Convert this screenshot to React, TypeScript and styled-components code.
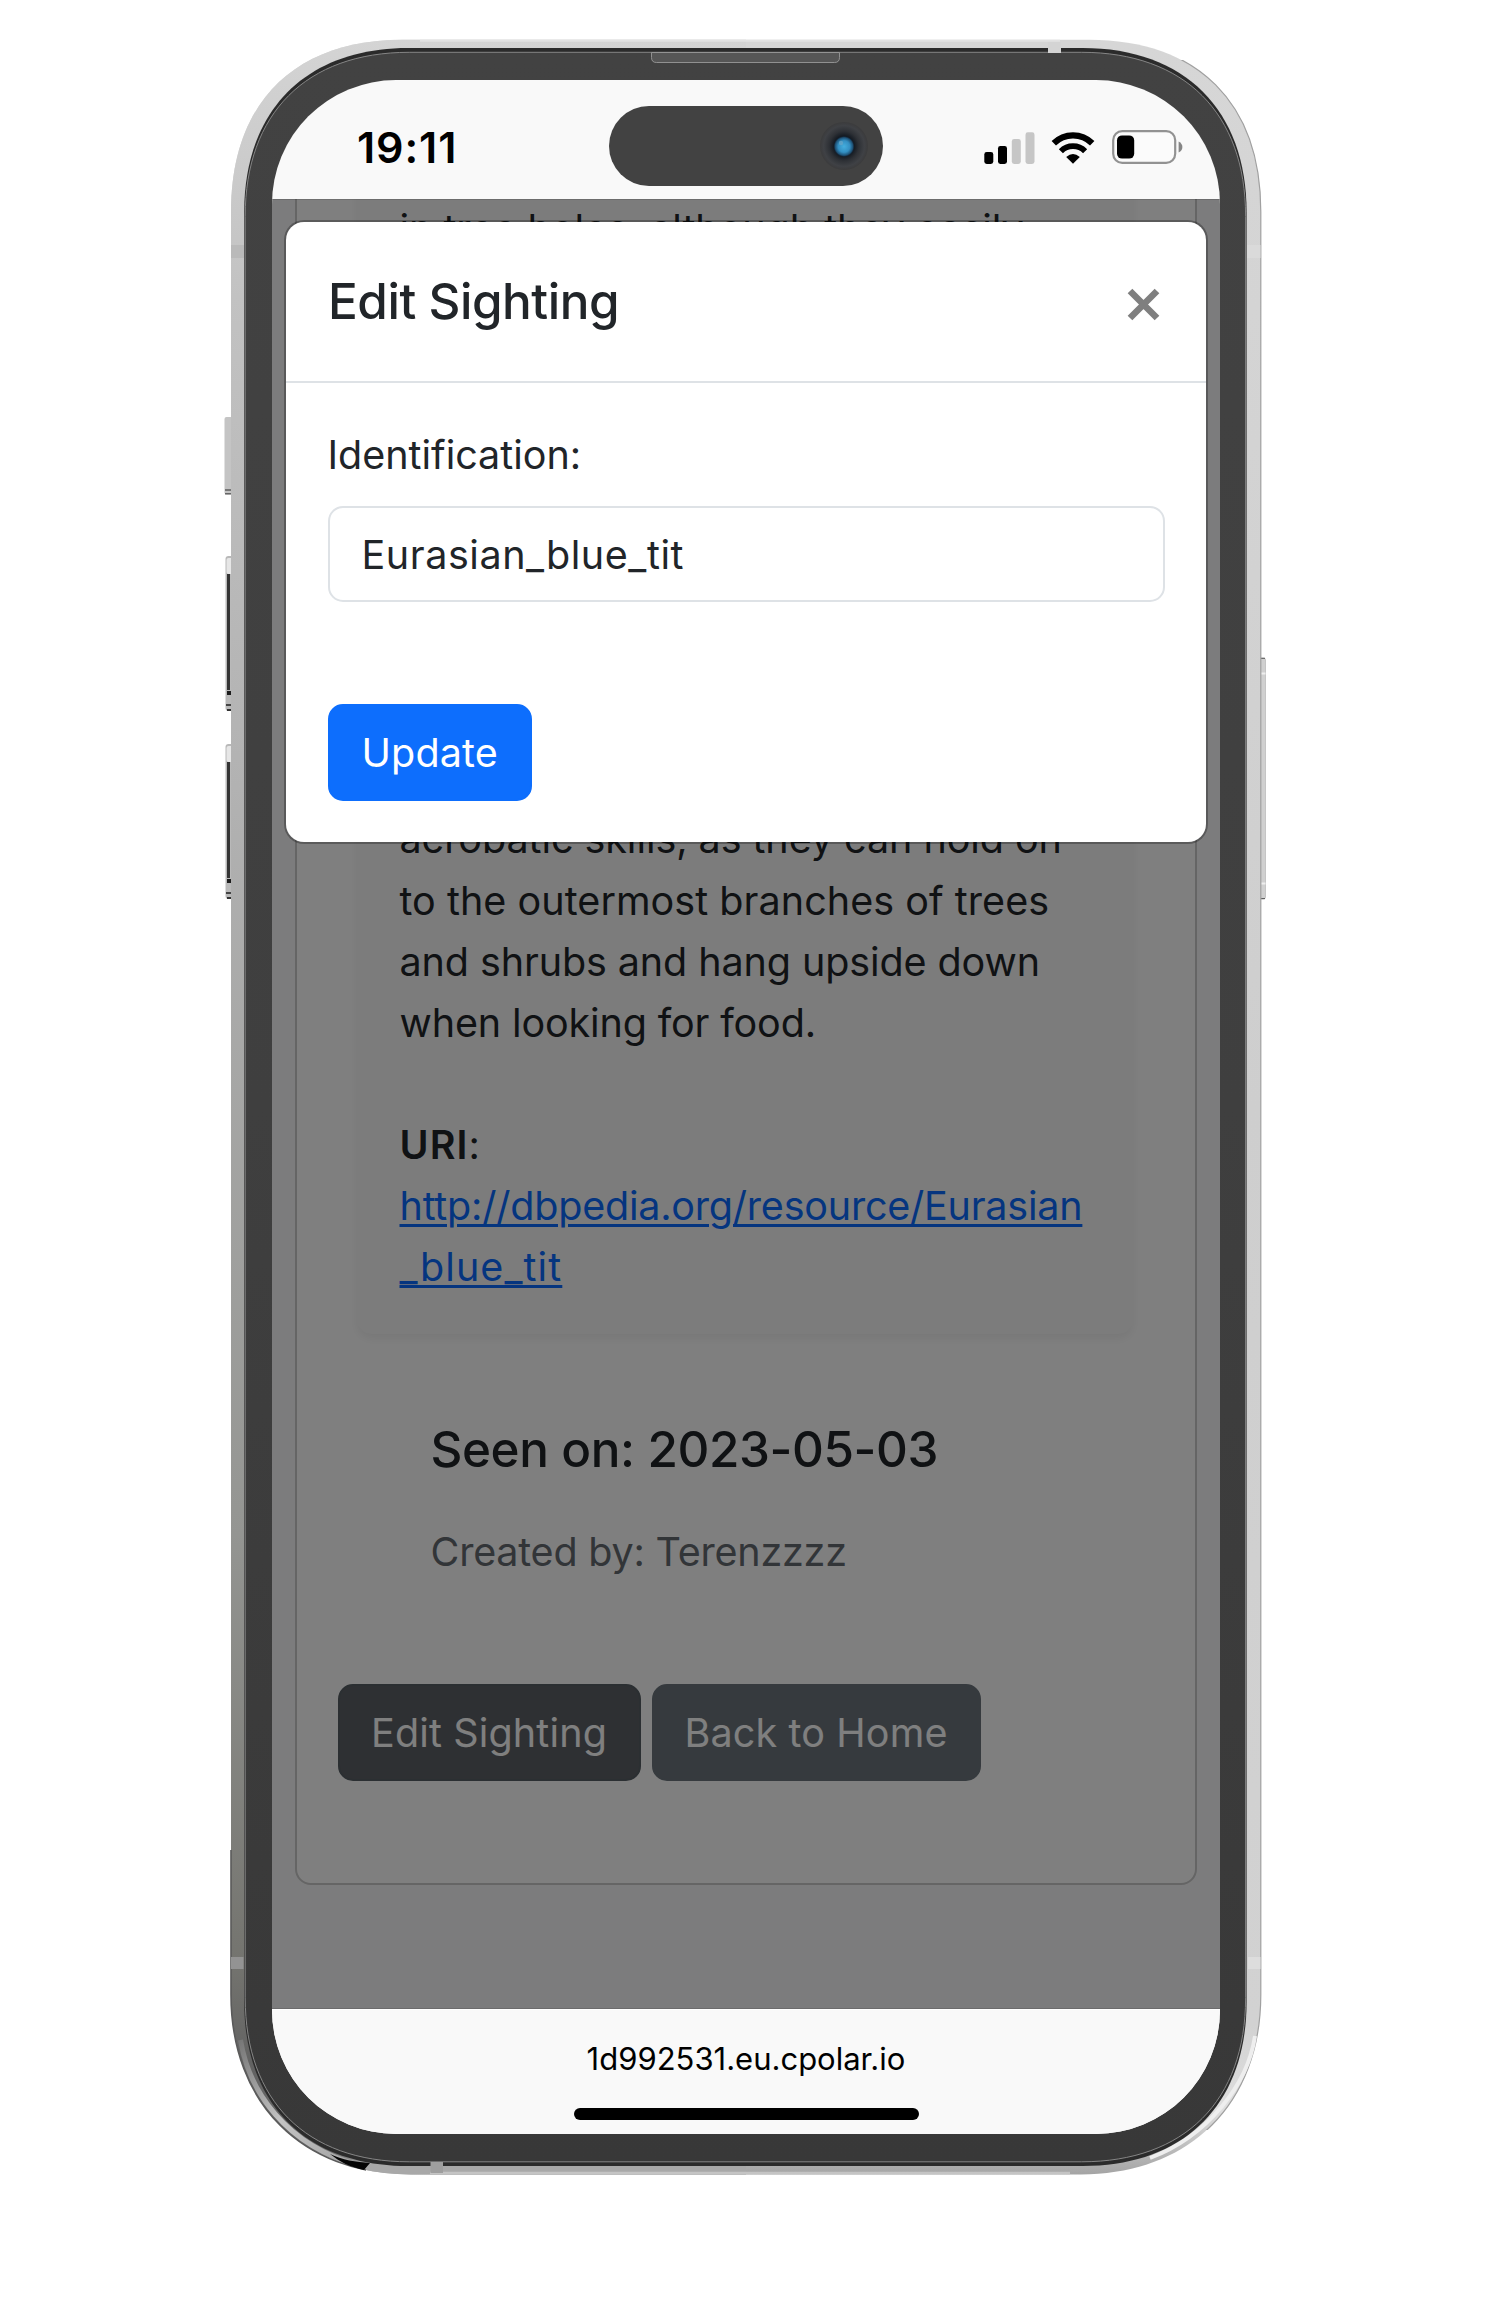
import React from "react";
import styled, { createGlobalStyle } from "styled-components";

const GlobalStyle = createGlobalStyle`
  *, *::before, *::after { box-sizing: border-box; }
  body {
    margin: 0;
    background: #fff;
    font-family: Inter, "Liberation Sans", sans-serif;
    color: #212529;
  }
`;

const Stage = styled.main`
  width: 1500px;
  height: 2300px;
  padding: 80px 0 0 272px;
  position: relative;
  background: #fff;
  overflow: hidden;
`;

const Bezel = styled.svg`
  position: absolute;
  inset: 0;
  display: block;
`;

const Screen = styled.div`
  position: relative;
  width: 948px;
  height: 2054px;
  border-radius: 124px;
  overflow: hidden;
  display: flex;
  flex-direction: column;
  background: #f9f9f9;
`;

const StatusBar = styled.header`
  display: flex;
  align-items: flex-start;
  justify-content: space-between;
  height: 119px;
  padding: 26px 37.5px 0 85px;
  flex: none;
`;

const Clock = styled.div`
  width: 200px;
  padding-top: 15px;
  font-size: 43px;
  line-height: 52px;
  font-weight: 600;
  letter-spacing: 0.9px;
  color: #000;
`;

const Island = styled.div`
  display: flex;
  align-items: center;
  justify-content: flex-end;
  width: 274px;
  height: 80px;
  margin-left: 51.5px;
  padding-right: 14px;
  border-radius: 40px;
  background: #424242;
`;

const StatusIcons = styled.div`
  display: flex;
  align-items: flex-end;
  gap: 16.5px;
  margin-left: auto;
  padding-top: 24px;
`;

const Glyph = styled.svg`
  display: block;
  flex: none;
`;

const Page = styled.div`
  position: relative;
  flex: none;
  height: 1810px;
  padding: 0 23px 0 22.5px;
  overflow: hidden;
  background: #f8f9fa;
`;

const Backdrop = styled.div`
  position: absolute;
  inset: 0;
  background: rgba(0, 0, 0, 0.5);
  border-bottom: 1px solid rgba(0, 0, 0, 0.12);
  border-top: 1px solid rgba(0, 0, 0, 0.12);
`;

const SightingCard = styled.section`
  margin-top: -40px;
  height: 1726px;
  padding: 0 41px;
  border: 2.5px solid #cacacb;
  border-radius: 16px;
  background: #fff;
`;

const InfoCard = styled.article`
  height: 1173px;
  margin: 0 21px 0 19px;
  padding: 37.5px 20px 0 43px;
  border-radius: 15px;
  background: #f9f9f9;
  box-shadow: 0 5px 10px rgba(0, 0, 0, 0.06);
`;

const Abstract = styled.p<{ $gapBefore?: number }>`
  margin: ${(p) => p.$gapBefore ?? 0}px 0 0;
  font-size: 39.5px;
  line-height: 61.1px;
`;

const Line = styled.span<{ $track?: number }>`
  display: block;
  white-space: nowrap;
  min-height: 61.1px;
  letter-spacing: ${(p) => p.$track ?? 0}px;
`;

const UriLabel = styled.strong`
  font-weight: 600;
  letter-spacing: 1.1px;
`;

const UriLink = styled.a`
  color: #0a6bff;
  text-decoration: underline;
  text-decoration-thickness: 2.5px;
  text-underline-offset: 4px;
`;

const Meta = styled.div`
  padding: 85px 0 0 93px;
`;

const SeenOn = styled.h2`
  margin: 0;
  font-size: 49.4px;
  line-height: 61px;
  font-weight: 500;
  letter-spacing: -0.4px;
`;

const CreatedBy = styled.p`
  margin: 42px 0 0;
  font-size: 39.5px;
  line-height: 61px;
  letter-spacing: -0.22px;
  color: #646a70;
`;

const Actions = styled.div`
  display: flex;
  gap: 11px;
  margin-top: 101px;
`;

const Button = styled.button<{ $tone: "primary" | "secondary" | "active"; $width: number }>`
  width: ${(p) => p.$width}px;
  height: 97px;
  padding: 1px 0 0;
  border: 2.5px solid
    ${(p) => ({ primary: "#0d6efd", secondary: "#6c757d", active: "#565e64" })[p.$tone]};
  border-radius: 15px;
  background: ${(p) => ({ primary: "#0d6efd", secondary: "#6c757d", active: "#5c6066" })[p.$tone]};
  color: #fff;
  font: 400 39.5px/61px Inter, "Liberation Sans", sans-serif;
  letter-spacing: 0.15px;
  text-align: center;
`;

const Modal = styled.div`
  position: absolute;
  top: 142px;
  left: 14px;
  width: 920px;
  height: 619.5px;
  border-radius: 18px;
  background: #fff;
  box-shadow: 0 0 0 2px rgba(0, 0, 0, 0.28);
`;

const ModalHeader = styled.div`
  display: flex;
  align-items: flex-start;
  justify-content: space-between;
  height: 160.5px;
  padding: 49px 46px 0 42px;
  border-bottom: 2.5px solid #dee2e6;
`;

const ModalTitle = styled.h1`
  margin: 0;
  font-size: 49.4px;
  line-height: 61px;
  font-weight: 500;
  letter-spacing: -0.45px;
`;

const CloseButton = styled.button`
  margin: 17px 0 0;
  padding: 0;
  border: 0;
  background: none;
  line-height: 0;
`;

const ModalBody = styled.form`
  display: flex;
  flex-direction: column;
  align-items: flex-start;
  padding: 42px 42px 0 41.5px;
`;

const Label = styled.label`
  font-size: 39.5px;
  line-height: 61px;
  letter-spacing: -0.02px;
`;

const TextInput = styled.input`
  width: 837px;
  height: 96.5px;
  margin: 20px 0 102px;
  padding: 2px 32px 0;
  border: 2.5px solid #dee2e6;
  border-radius: 15px;
  background: #fff;
  color: #212529;
  font: 400 39.5px/61px Inter, "Liberation Sans", sans-serif;
  letter-spacing: 0.56px;
  outline: none;
`;

const AddressBar = styled.footer`
  display: flex;
  flex-direction: column;
  align-items: center;
  flex: 1;
  padding-top: 28.5px;
  background: #f9f9f9;
  border-top: 1px solid #fff;
`;

const Host = styled.div`
  font-size: 31px;
  line-height: 40px;
  color: #000;
`;

const HomeIndicator = styled.div`
  width: 345px;
  height: 12px;
  margin-top: 29.5px;
  border-radius: 6px;
  background: #000;
`;

/** Closed outline with continuous corners: e is the corner extent, c its control inset. */
function outline(
  l: number, t: number, r: number, b: number,
  e: number, c: number, be = e, bc = c,
) {
  return [
    `M${l + e} ${t}`,
    `H${r - e}`,
    `C${r - c} ${t} ${r} ${t + c} ${r} ${t + e}`,
    `V${b - be}`,
    `C${r} ${b - bc} ${r - bc} ${b} ${r - be} ${b}`,
    `H${l + be}`,
    `C${l + bc} ${b} ${l} ${b - bc} ${l} ${b - be}`,
    `V${t + e}`,
    `C${l} ${t + c} ${l + c} ${t} ${l + e} ${t}Z`,
  ].join("");
}

const rimOutline = outline(231, 39.8, 1260.8, 2174.4, 172, 63, 180, 71);

function VolumeKey({ y }: { y: number }) {
  return (
    <g>
      <rect x="225.5" y={y} width="8" height="155" rx="3" fill="#b9b9b9" />
      <rect x="226.5" y={y + 2} width="7" height="16" rx="2" fill="#e6e6e6" />
      <path d={`M228.5 ${y + 18}V${y + 134}`} stroke="#343434" strokeWidth="3" />
      <rect x="227" y={y + 135} width="5" height="4" fill="#1c1c1c" />
      <rect x="226" y={y + 148} width="5" height="2" fill="#444" />
      <rect x="227" y={y + 153} width="4" height="2" fill="#333" />
    </g>
  );
}

function PhoneFrame() {
  return (
    <Bezel width="1500" height="2300" viewBox="0 0 1500 2300" aria-hidden="true">
      <defs>
        <linearGradient id="rimLeft" x1="0" y1="0" x2="0" y2="1">
          <stop offset="0" stopColor="#d4d4d4" />
          <stop offset="0.12" stopColor="#c2c2c2" />
          <stop offset="0.35" stopColor="#b2b2b2" />
          <stop offset="0.7" stopColor="#949592" />
          <stop offset="0.9" stopColor="#74746f" />
          <stop offset="0.95" stopColor="#626262" />
          <stop offset="0.99" stopColor="#6a6a6a" />
          <stop offset="0.995" stopColor="#a8a8a8" />
        </linearGradient>
        <linearGradient id="rimRight" x1="0" y1="0" x2="0" y2="1">
          <stop offset="0" stopColor="#d6d6d6" />
          <stop offset="0.5" stopColor="#cecece" />
          <stop offset="0.93" stopColor="#d2d2d2" />
          <stop offset="0.97" stopColor="#dedede" />
          <stop offset="1" stopColor="#a4a4a4" />
        </linearGradient>
        <linearGradient id="glass" x1="0" y1="0" x2="0" y2="1">
          <stop offset="0" stopColor="#424242" />
          <stop offset="0.5" stopColor="#3f3f3f" />
          <stop offset="1" stopColor="#383838" />
        </linearGradient>
        <linearGradient id="cornerShine" x1="0" y1="0" x2="1" y2="1">
          <stop offset="0" stopColor="#777" />
          <stop offset="0.5" stopColor="#c4c4c4" />
          <stop offset="1" stopColor="#a0a0a0" />
        </linearGradient>
        <clipPath id="leftHalf">
          <rect x="0" y="0" width="746" height="2300" />
        </clipPath>
        <clipPath id="lowerLeft">
          <rect x="200" y="1850" width="166" height="340" />
        </clipPath>
        <clipPath id="rightEdge">
          <rect x="1150" y="60" width="130" height="2070" />
        </clipPath>
      </defs>

      <rect x="224.5" y="417" width="8" height="77.5" rx="2" fill="#c4c4c4" />
      <rect x="225" y="489" width="7" height="2" fill="#777" />
      <rect x="225" y="493" width="7" height="1.5" fill="#666" />
      <VolumeKey y={556} />
      <VolumeKey y={744} />
      <rect x="1258" y="658" width="7.5" height="241" rx="2" fill="#d0d0d0" stroke="#bcbcbc" strokeWidth="0.8" />
      <path d="M1260 673.5H1265.5M1260 883.5H1265.5" stroke="#eee" strokeWidth="2" />
      <path d="M1260 658.3H1265M1260 898.6H1265" stroke="#555" strokeWidth="1" />

      <path d={rimOutline} fill="url(#rimRight)" />
      <path d={rimOutline} fill="url(#rimLeft)" clipPath="url(#leftHalf)" />
      <path d="M420 40.8H1060" stroke="#e2e2e2" strokeWidth="2" />
      <path d={rimOutline} fill="none" stroke="#a0a0a0" strokeWidth="1.2" clipPath="url(#rightEdge)" />
      <path d="M1255 2036C1248 2084 1208 2136 1150 2158" fill="none" stroke="#eeeeee" strokeWidth="4" />
      <path d={rimOutline} fill="none" stroke="#5a5a5a" strokeWidth="1.6" clipPath="url(#lowerLeft)" />
      <path d="M240.5 2040C249 2092 286 2145 358 2165" fill="none" stroke="url(#cornerShine)" strokeWidth="5" />
      <path d="M330 2154C342 2160 356 2162 370 2163L364 2170C350 2167 340 2162 330 2154Z" fill="#050505" />
      <path d="M430 2173H1070" stroke="#c4c4c4" strokeWidth="2.4" />

      <path d={outline(244.2, 48, 1246.6, 2166, 164, 62)} fill="#2b2b2b" />
      <path d={outline(245.2, 52.3, 1245.6, 2161.8, 164, 61)} fill="url(#glass)" stroke="#858585" strokeWidth="1" />
      <path d="M651.5 52.5V57.5Q651.5 62.5 656.5 62.5H834.5Q839.5 62.5 839.5 57.5V52.5Z" fill="#565656" stroke="#999" strokeWidth="0.9" />

      <rect x="1048" y="42" width="13" height="11" fill="#d4d4d4" />
      <rect x="430.5" y="2162" width="12.5" height="11" fill="#9e9e9e" />
      <rect x="231" y="245" width="13" height="13" fill="#bababa" />
      <rect x="1247" y="245" width="13.5" height="13" fill="#dadada" />
      <rect x="231" y="1957" width="12.5" height="12" fill="#939393" />
      <rect x="1248" y="1957" width="12.5" height="12" fill="#dddddd" />
    </Bezel>
  );
}

function Camera() {
  return (
    <Glyph width="50" height="50" viewBox="0 0 50 50" aria-hidden="true">
      <defs>
        <radialGradient id="lens">
          <stop offset="0" stopColor="#0d1622" />
          <stop offset="0.42" stopColor="#141a22" />
          <stop offset="0.62" stopColor="#2e3136" />
          <stop offset="0.85" stopColor="#3f4145" />
          <stop offset="1" stopColor="#3b3b3c" />
        </radialGradient>
        <radialGradient id="iris">
          <stop offset="0" stopColor="#45aede" />
          <stop offset="0.55" stopColor="#338fc2" />
          <stop offset="0.85" stopColor="#1d4f73" />
          <stop offset="1" stopColor="#14283c" stopOpacity="0.2" />
        </radialGradient>
      </defs>
      <circle cx="25" cy="25" r="24" fill="url(#lens)" />
      <circle cx="25" cy="25.5" r="10.5" fill="url(#iris)" />
      <circle cx="22" cy="22" r="2.2" fill="#6ba5c6" opacity="0.7" />
    </Glyph>
  );
}

function SignalIcon() {
  return (
    <Glyph width="51" height="32" viewBox="0 0 51 32" aria-hidden="true">
      <rect x="0.3" y="20" width="9" height="12" rx="2.4" fill="#000" />
      <rect x="14" y="14" width="9" height="18" rx="2.4" fill="#000" />
      <rect x="27.8" y="7" width="9" height="25" rx="2.4" fill="#c6c6c6" />
      <rect x="41.5" y="0.3" width="9" height="31.7" rx="2.4" fill="#c6c6c6" />
    </Glyph>
  );
}

function WifiIcon() {
  return (
    <Glyph width="44" height="32" viewBox="0 0 44 32" aria-hidden="true">
      <path d="M2.8 11.3A27.2 27.2 0 0 1 41.2 11.3" fill="none" stroke="#000" strokeWidth="6.2" />
      <path d="M9.9 19.2A17 17 0 0 1 34.1 19.2" fill="none" stroke="#000" strokeWidth="5.8" />
      <path d="M22 31.8L15.2 25Q22 19.2 28.8 25Z" fill="#000" />
    </Glyph>
  );
}

function BatteryIcon() {
  return (
    <Glyph width="71" height="34" viewBox="0 0 71 34" aria-hidden="true">
      <rect x="1.2" y="1.2" width="62" height="31.6" rx="9" fill="#fbfbfb" stroke="#929292" strokeWidth="2.2" />
      <rect x="5" y="5.4" width="17.2" height="23.2" rx="5" fill="#000" />
      <path d="M66.6 11.5Q70.4 13.5 70.4 17T66.6 22.5Z" fill="#858585" />
    </Glyph>
  );
}

export default function App() {
  return (
    <>
      <GlobalStyle />
      <Stage>
        <PhoneFrame />
        <Screen>
          <StatusBar>
            <Clock>19:11</Clock>
            <Island>
              <Camera />
            </Island>
            <StatusIcons>
              <SignalIcon />
              <WifiIcon />
              <BatteryIcon />
            </StatusIcons>
          </StatusBar>

          <Page>
            <SightingCard>
              <InfoCard>
                <Abstract>
                  <Line $track={-0.04}>in tree holes, although they easily</Line>
                </Abstract>
                <Abstract $gapBefore={549.9}>
                  <Line $track={-0.06}>acrobatic skills, as they can hold on</Line>
                  <Line $track={0.05}>to the outermost branches of trees</Line>
                  <Line $track={-0.1}>and shrubs and hang upside down</Line>
                  <Line $track={-0.14}>when looking for food.</Line>
                </Abstract>
                <Abstract $gapBefore={61.1}>
                  <Line>
                    <UriLabel>URI</UriLabel>:
                  </Line>
                  <UriLink>
                    <Line $track={-0.22}>http://dbpedia.org/resource/Eurasian</Line>
                    <Line $track={1.1}>_blue_tit</Line>
                  </UriLink>
                </Abstract>
              </InfoCard>
              <Meta>
                <SeenOn>Seen on: 2023-05-03</SeenOn>
                <CreatedBy>Created by: Terenzzzz</CreatedBy>
              </Meta>
              <Actions>
                <Button type="button" $tone="active" $width={303}>Edit Sighting</Button>
                <Button type="button" $tone="secondary" $width={329}>Back to Home</Button>
              </Actions>
            </SightingCard>
            <Backdrop />
          </Page>

          <AddressBar>
            <Host>1d992531.eu.cpolar.io</Host>
            <HomeIndicator />
          </AddressBar>

          <Modal role="dialog">
            <ModalHeader>
              <ModalTitle>Edit Sighting</ModalTitle>
              <CloseButton type="button" aria-label="Close">
                <Glyph width="33" height="33" viewBox="0 0 33 33" aria-hidden="true">
                  <path d="M3 3L30 30M30 3L3 30" stroke="#7f7f7f" strokeWidth="6.6" />
                </Glyph>
              </CloseButton>
            </ModalHeader>
            <ModalBody>
              <Label htmlFor="identification">Identification:</Label>
              <TextInput id="identification" defaultValue="Eurasian_blue_tit" />
              <Button type="button" $tone="primary" $width={204.5}>Update</Button>
            </ModalBody>
          </Modal>
        </Screen>
      </Stage>
    </>
  );
}
